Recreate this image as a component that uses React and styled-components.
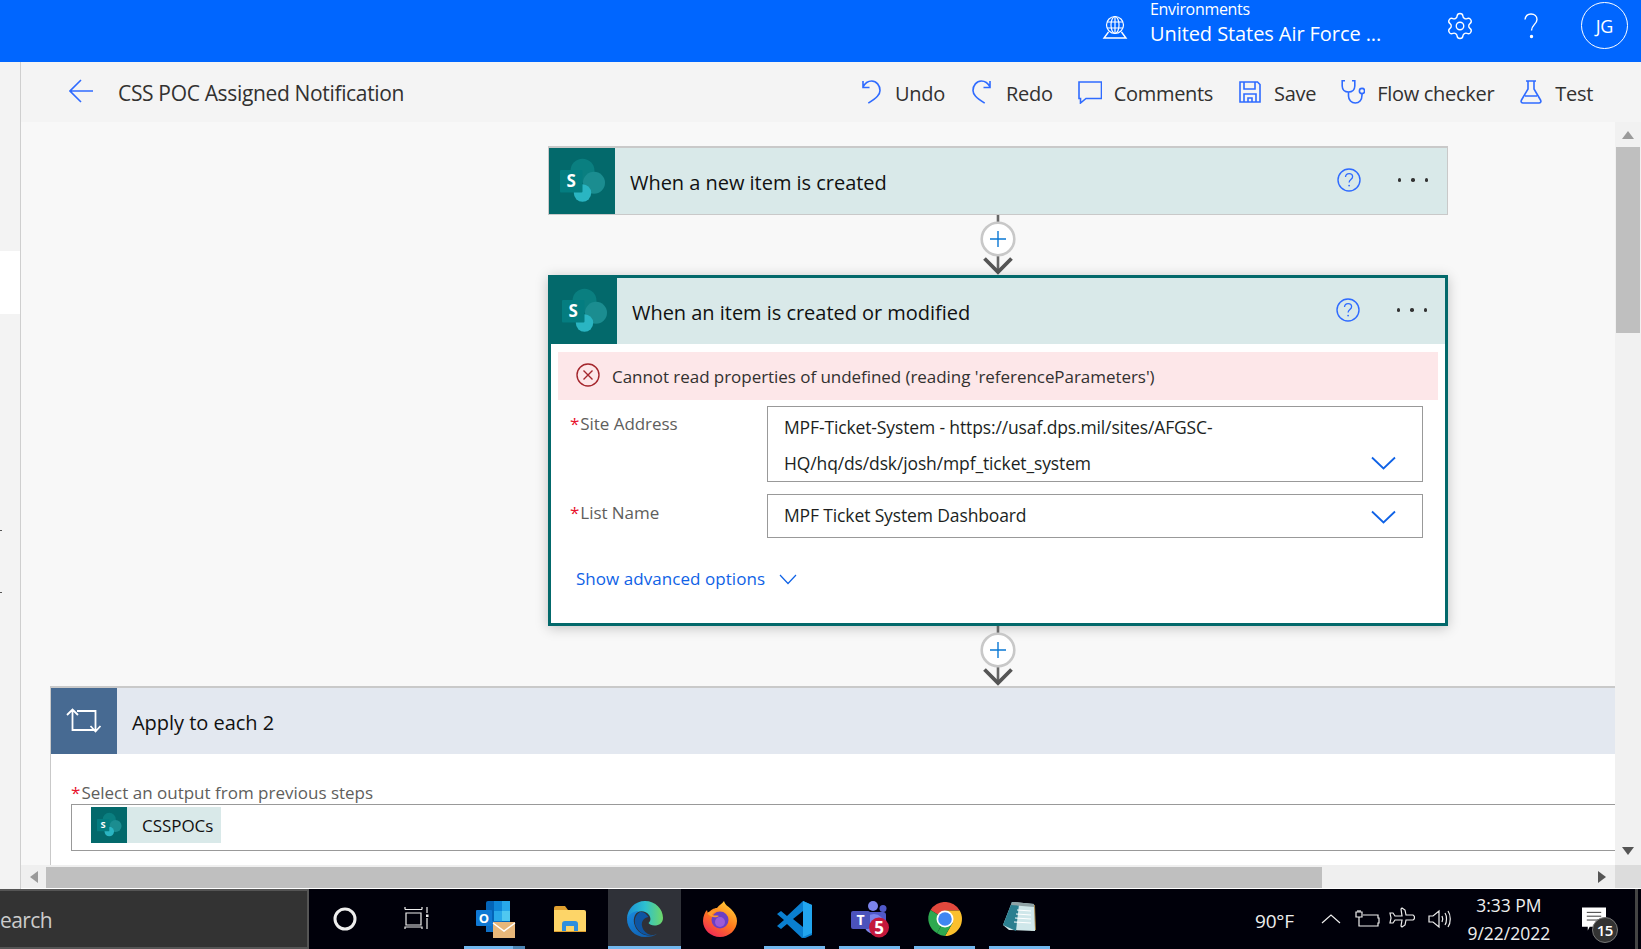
import React from 'react';
import styled, { createGlobalStyle } from 'styled-components';
import { Settings } from 'lucide-react';

const Global = createGlobalStyle`
  html, body { margin: 0; padding: 0; height: 100%; overflow: hidden; }
  body { font-family: "Open Sans", "Noto Sans", sans-serif; background: #000; }
  * { box-sizing: border-box; }
`;

const BLUE = '#2f6bff';
const TEAL = '#03696b';

const Page = styled.div`
  width: 1641px; height: 949px; display: flex; flex-direction: column; overflow: hidden;
`;

/* top bar */
const TopBar = styled.header`
  height: 62px; flex: none; background: #0066ff; color: #fff; display: flex; align-items: flex-start; justify-content: flex-end; padding-right: 13px;
`;
const GlobeSlot = styled.div`
  width: 26px; height: 26px; margin-top: 14px; margin-right: 22px; display: flex;
`;
const EnvBlock = styled.div`
  width: 297px; display: flex; flex-direction: column;
`;
const EnvLabel = styled.span`font-size: 16px; line-height: 18px; letter-spacing: -0.33px;`;
const EnvName = styled.span`font-size: 20px; line-height: 30px; margin-top: 1px; letter-spacing: -0.08px;`;
const TopIcon = styled.div`
  width: 26px; height: 28px; margin-top: 12px; margin-right: ${p => p.$mr}px; display: flex; align-items: center; justify-content: center;
  svg.gear { flex: none; }
`;
const QuestionGlyph = styled.svg`width: 16px; height: 26px;`;
const Avatar = styled.div`
  width: 47px; height: 47px; margin-top: 2px; border: 1px solid #fff; border-radius: 50%; display: flex; align-items: center; justify-content: center; font-size: 18px; letter-spacing: -0.3px;
`;

/* body */
const Body = styled.div`flex: 1; display: flex; min-height: 0;`;
const Rail = styled.nav`
  width: 21px; flex: none; background: #f3f3f3; border-right: 1px solid #cfcfcf; display: flex; flex-direction: column;
`;
const RailActive = styled.div`height: 63px; margin-top: 189px; background: #fff; margin-right: 0;`;
const RailPip = styled.div`width: 2px; height: 1px; background: #555; margin-top: ${p => p.$mt}px;`;
const Main = styled.main`flex: 1; min-width: 0; display: flex; flex-direction: column;`;

/* command bar */
const CommandBar = styled.div`
  height: 60px; flex: none; background: #f4f4f4; display: flex; align-items: center; padding: 2px 48px 0 48px; color: #323130; font-size: 20px;
`;
const BackIcon = styled.svg`width: 24px; height: 24px; margin-right: 25px; margin-top: -4px; flex: none;`;
const FlowTitle = styled.div`flex: 1; letter-spacing: -0.34px; font-size: 21px; margin-top: -1px;`;
const Commands = styled.div`display: flex; gap: 25px;`;
const Command = styled.button`
  display: flex; align-items: center; gap: 12px; border: 0; padding: 0; background: none; font: inherit; color: inherit; letter-spacing: -0.3px;
  svg { width: 24px; height: 24px; flex: none; margin-top: -3px; fill: none; stroke: ${BLUE}; stroke-width: 1.6; }
`;

/* canvas */
const Viewport = styled.div`flex: 1; min-height: 0; display: flex;`;
const Canvas = styled.div`
  flex: 1; min-width: 0; background: #f8f8f8; overflow: hidden; padding-top: 24px; display: flex; flex-direction: column;
`;
const StepColumn = styled.section`width: 900px; margin-left: 527px; display: flex; flex-direction: column;`;
const TriggerCard = styled.div`
  height: 69px; background: #d9e9e9; border: 1px solid #c9c9c9; border-top-width: 2px; display: flex; align-items: stretch;
`;
const ActiveCard = styled.div`
  height: 351px; border: 3px solid ${TEAL}; background: #fff; box-shadow: 0 2px 12px rgba(0,0,0,.22); display: flex; flex-direction: column;
`;
const CardHeader = styled.div`height: 66px; flex: none; background: #d9e9e9; display: flex; align-items: stretch;`;
const IconBlock = styled.div`
  width: ${p => p.$w || 66}px; flex: none; background: ${p => p.$bg || TEAL}; display: flex; align-items: center; justify-content: center;
`;
const CardTitle = styled.div`
  flex: 1; display: flex; align-items: center; padding: 2px 0 0 ${p => p.$pl}px; font-size: 20px; color: #111; letter-spacing: -0.03px;
`;
const HelpIcon = styled.svg`width: 26px; height: 26px; align-self: center; margin-top: -2px; margin-right: 36px;`;
const Dots = styled.div`
  display: flex; gap: 10px; align-self: center; margin-top: -2px; margin-right: ${p => p.$mr}px;
  i { width: 3.5px; height: 3.5px; border-radius: 50%; background: #333; display: block; }
`;
const ErrorBar = styled.div`
  height: 48px; flex: none; margin: 8px 7px 0; background: #fde7e9; display: flex; align-items: center; padding-left: 18px; gap: 12px; font-size: 17px; color: #323130; letter-spacing: -0.05px;
`;
const ErrorIcon = styled.svg`width: 24px; height: 24px; flex: none; margin-top: -2px;`;
const FieldRow = styled.div`
  display: grid; grid-template-columns: 197px 656px; padding-left: 19px; margin-top: ${p => p.$mt}px;
`;
const FieldLabel = styled.label`
  padding-top: ${p => p.$pt}px; line-height: 22px; font-size: 17px; color: #605e5c; letter-spacing: -0.05px;
`;
const Star = styled.span`color: #e8112d; margin-right: 1px;`;
const FieldBox = styled.div`
  height: ${p => p.$h}px; border: 1px solid #999; background: #fff; display: flex; padding-left: 16px; padding-right: 26px; font-size: 17.5px; color: #201f1e; letter-spacing: -0.13px;
`;
const FieldValue = styled.div`flex: 1; line-height: ${p => p.$lh}px; padding-top: ${p => p.$pt}px;`;
const FieldChevron = styled.svg`width: 25px; height: 14px; flex: none; align-self: ${p => p.$align}; margin-bottom: ${p => p.$mb}px;`;
const AdvancedLink = styled.a`
  display: flex; align-items: center; gap: 14px; margin: 29px 0 0 25px; font-size: 17px; line-height: 24px; color: #0f62e6; letter-spacing: 0.05px;
`;
const ConnectorWrap = styled.div`height: 60px; flex: none; display: flex; justify-content: center;`;
const LoopCard = styled.section`
  margin-left: 29px; width: 1700px; flex: 1; display: flex; flex-direction: column; border-top: 2px solid #c9c9c9; border-left: 1px solid #c9c9c9; background: #fff;
`;
const LoopHeader = styled.div`height: 66px; flex: none; background: #e3e8f0; display: flex; align-items: stretch;`;
const LoopBody = styled.div`padding: 28px 0 0 20px;`;
const LoopLabel = styled.div`line-height: 22px; font-size: 17px; color: #605e5c; letter-spacing: 0px;`;
const TokenField = styled.div`
  height: 47px; border: 1px solid #999; padding: 2px 0 0 19px; display: flex;
`;
const Token = styled.div`
  height: 36px; width: 130px; background: #d9e9e9; display: flex; align-items: center; font-size: 17px; color: #111; letter-spacing: -0.05px;
`;
const TokenText = styled.span`padding-left: 15px;`;

/* scrollbars */
const VScroll = styled.div`
  width: 26px; flex: none; background: #f1f1f1; display: flex; flex-direction: column; align-items: stretch;
`;
const ArrowSlot = styled.div`
  height: ${p => p.$h}px; flex: none; display: flex; align-items: center; justify-content: center;
`;
const VThumb = styled.div`height: 186px; flex: none; background: #bfbfbf; margin: 0 1px;`;
const VSpacer = styled.div`flex: 1;`;
const HScroll = styled.div`
  height: 24px; flex: none; display: flex; background: #efefef; border-bottom: 1px solid #fff;
`;
const HArrow = styled.div`width: 25px; flex: none; display: flex; align-items: center; justify-content: center;`;
const HThumb = styled.div`width: 1276px; height: 21px; margin-top: 2px; background: #bfbfbf; flex: none;`;
const HSpacer = styled.div`flex: 1;`;
const HArrowEnd = styled.div`width: 26px; flex: none; display: flex; align-items: center; justify-content: center;`;
const HCorner = styled.div`width: 26px; flex: none; background: #dcdcdc;`;

/* taskbar */
const Taskbar = styled.footer`
  height: 60px; flex: none; background: #00000a; display: flex; align-items: stretch; color: #eee;
`;
const SearchBox = styled.div`
  width: 309px; margin-right: -2px; padding-top: 2px; flex: none; background: #333; border: 2px solid #555; border-left: 0; display: flex; align-items: center; font-size: 21px; color: #ccc; letter-spacing: -0.6px;
`;
const TaskItem = styled.div`
  width: 75px; flex: none; position: relative; display: flex; align-items: center; justify-content: center; background: ${p => (p.$active ? 'linear-gradient(90deg,#00000a 1px,#2f3138 1px,#2f3138 74px,#00000a 74px)' : 'none')};
  ${p => p.$bar && `&::after { content: ''; position: absolute; bottom: 0; height: 3px; left: ${p.$active ? 1 : 7}px; right: ${p.$active ? 1 : 7}px; background: ${p.$split ? 'linear-gradient(90deg,#72b7ee 80%,#4c85b5 80%)' : '#72b7ee'}; }`}
`;
const TaskViewGlyph = styled.svg`width: 26px; height: 26px; margin-right: 6px; fill: none; stroke: #eee; stroke-width: 1.2;`;
const Tray = styled.div`flex: 1; display: flex; align-items: center;`;
const Temp = styled.span`font-size: 19px; margin-left: 198px; letter-spacing: -0.2px; margin-top: 3px;`;
const TrayIcon = styled.svg`
  width: ${p => p.$w}px; height: 24px; margin-left: ${p => p.$ml}px; flex: none; fill: none; stroke: #eee; stroke-width: 1.2;
`;
const Clock = styled.div`
  width: 100px; margin-left: 7px; display: flex; flex-direction: column; align-items: center; font-size: 17.5px; line-height: 28px; color: #eee; margin-top: -1px; letter-spacing: 0px;
`;
const Notice = styled.div`
  width: 36px; height: 40px; margin-left: 23px; position: relative; align-self: flex-start; margin-top: 18px;
`;
const NoticeBadge = styled.span`
  position: absolute; right: 0; bottom: 4px; width: 26px; height: 26px; border-radius: 50%; background: #333; border: 1px solid #777; color: #fff; font-size: 15px; font-weight: 600; display: flex; align-items: center; justify-content: center; letter-spacing: -0.5px;
`;
const EdgeLine = styled.div`width: 3px; align-self: stretch; background: #444; margin-left: 17px;`;

/* drawings */
function SpIcon({ size = 66 }) {
  return (
    <svg width={size} height={size} viewBox="0 0 66 66">
      <circle cx="33.5" cy="22.7" r="12" fill="#0a7f80" />
      <circle cx="45" cy="34.7" r="11" fill="#1b8d90" />
      <circle cx="33.5" cy="45" r="8.7" fill="#2ab5c2" />
      <rect x="11" y="22" width="22.5" height="22.5" rx="1" fill="#047d80" />
      <text x="22.3" y="39" textAnchor="middle" fontFamily="Open Sans" fontWeight="700" fontSize="17" fill="#fff">S</text>
    </svg>
  );
}
function Help() {
  return (
    <HelpIcon viewBox="0 0 26 26">
      <circle cx="13" cy="13" r="11" fill="none" stroke={BLUE} strokeWidth="1.4" />
      <path d="M9.5 10c.2-2.2 1.7-3.3 3.6-3.3 2 0 3.5 1.3 3.5 3.1 0 2.7-3.5 2.8-3.5 5.6" fill="none" stroke={BLUE} strokeWidth="1.3" />
      <circle cx="13.1" cy="18.6" r="0.9" fill={BLUE} />
    </HelpIcon>
  );
}
function Connector() {
  return (
    <ConnectorWrap>
      <svg width="36" height="60" viewBox="0 0 36 60">
        <path d="M18 0v7M18 40v18" stroke="#666" strokeWidth="2.6" />
        <circle cx="18" cy="24" r="16.3" fill="#fff" stroke="#c8c8c8" strokeWidth="2.6" />
        <path d="M18 16v16M10 24h16" stroke="#0a78d4" strokeWidth="1.4" />
        <path d="M4.5 43.5L18 57l13.5-13.5" fill="none" stroke="#555" strokeWidth="3.8" />
      </svg>
    </ConnectorWrap>
  );
}
function Chevron({ $align, $mb }) {
  return (
    <FieldChevron $align={$align} $mb={$mb} viewBox="0 0 25 14">
      <path d="M1 1.5l11.5 11L24 1.5" fill="none" stroke="#0f62e6" strokeWidth="1.8" />
    </FieldChevron>
  );
}
const SmallChev = styled.svg`width: 18px; height: 11px;`;

export default function App() {
  return (
    <Page>
      <Global />
      <TopBar>
        <GlobeSlot>
          <svg width="26" height="26" viewBox="0 0 26 26" fill="none" stroke="#fff" strokeWidth="1.2">
            <circle cx="13" cy="11" r="8.5" />
            <ellipse cx="13" cy="11" rx="4" ry="8.5" />
            <path d="M13 2.5v17M5 8h16M5 14h16" />
            <path d="M6.5 18L2 24h22l-4.5-6" strokeWidth="1.4" />
          </svg>
        </GlobeSlot>
        <EnvBlock>
          <EnvLabel>Environments</EnvLabel>
          <EnvName>United States Air Force ...</EnvName>
        </EnvBlock>
        <TopIcon $mr={45}><Settings className="gear" size={30} strokeWidth={1.1} color="#fff" /></TopIcon>
        <TopIcon $mr={37}>
          <QuestionGlyph viewBox="0 0 16 26" fill="none" stroke="#fff" strokeWidth="1.4">
            <path d="M2 6.5C2.5 3 5 1 8 1c3.5 0 6 2.3 6 5.5 0 4.5-5.5 5.5-5.5 11" />
            <circle cx="8.5" cy="23.5" r="1" fill="#fff" />
          </QuestionGlyph>
        </TopIcon>
        <Avatar>JG</Avatar>
      </TopBar>
      <Body>
        <Rail>
          <RailActive />
          <RailPip $mt={216} />
          <RailPip $mt={61} />
        </Rail>
        <Main>
          <CommandBar>
            <BackIcon viewBox="0 0 24 24" fill="none" stroke={BLUE} strokeWidth="1.6">
              <path d="M1 12h23M12 1L1 12l11 11" />
            </BackIcon>
            <FlowTitle>CSS POC Assigned Notification</FlowTitle>
            <Commands>
              <Command>
                <svg viewBox="0 0 24 24"><path d="M4 1v6.500h6.500M4 7C6 3 9 1 12.700 1 17.500 1 21 5.500 21 10.500c0 4-3 7-11.700 12.700" /></svg>
                Undo
              </Command>
              <Command>
                <svg viewBox="0 0 24 24"><path d="M20 1v6.500h-6.500M20 7C18 3 15 1 11.300 1 6.500 1 3 5.500 3 10.500c0 4 3 7 11.700 12.700" /></svg>
                Redo
              </Command>
              <Command>
                <svg viewBox="0 0 24 24"><path d="M1 2h22.500v16.500H8L2.500 23v-4.500H1z" /></svg>
                Comments
              </Command>
              <Command>
                <svg viewBox="0 0 24 24"><path d="M2 2h17.500L22 4.500V22H2zM6 2v7h11V2M6 22v-8h12v8M10 22v-4h4v4" /></svg>
                Save
              </Command>
              <Command>
                <svg viewBox="0 0 24 24"><path d="M4 .8H1.200V6c0 3.500 2.600 6 6.300 6s6.300-2.500 6.300-6V.8H11M7.500 12v4c0 4 3 7 6.800 7s6.700-3 6.700-8v-1" /><circle cx="21" cy="11" r="2.600" /></svg>
                Flow checker
              </Command>
              <Command>
                <svg viewBox="0 0 24 24"><path d="M7 1h10M9 1v8L2.500 20c-1 1.800 0 3 1.500 3h16c1.500 0 2.500-1.200 1.500-3L15 9V1M6 16h12" /></svg>
                Test
              </Command>
            </Commands>
          </CommandBar>
          <Viewport>
            <Canvas>
              <StepColumn>
                <TriggerCard>
                  <IconBlock><SpIcon /></IconBlock>
                  <CardTitle $pl={15}>When a new item is created</CardTitle>
                  <Help />
                  <Dots $mr={19}><i /><i /><i /></Dots>
                </TriggerCard>
                <Connector />
                <ActiveCard>
                  <CardHeader>
                    <IconBlock><SpIcon /></IconBlock>
                    <CardTitle $pl={15}>When an item is created or modified</CardTitle>
                    <Help />
                    <Dots $mr={18}><i /><i /><i /></Dots>
                  </CardHeader>
                  <ErrorBar>
                    <ErrorIcon viewBox="0 0 24 24" fill="none" stroke="#a4262c" strokeWidth="1.4">
                      <circle cx="12" cy="12" r="11" />
                      <path d="M7.500 7.500l9 9M16.500 7.500l-9 9" />
                    </ErrorIcon>
                    Cannot read properties of undefined (reading 'referenceParameters')
                  </ErrorBar>
                  <FieldRow $mt={6}>
                    <FieldLabel $pt={7}><Star>*</Star>Site Address</FieldLabel>
                    <FieldBox $h={76}>
                      <FieldValue $lh={36} $pt={2}>
                        MPF-Ticket-System - https://usaf.dps.mil/sites/AFGSC-<br />HQ/hq/ds/dsk/josh/mpf_ticket_system
                      </FieldValue>
                      <Chevron $align="flex-end" $mb={11} />
                    </FieldBox>
                  </FieldRow>
                  <FieldRow $mt={12}>
                    <FieldLabel $pt={8}><Star>*</Star>List Name</FieldLabel>
                    <FieldBox $h={44}>
                      <FieldValue $lh={41} $pt={0}>MPF Ticket System Dashboard</FieldValue>
                      <Chevron $align="center" $mb={-2} />
                    </FieldBox>
                  </FieldRow>
                  <AdvancedLink>
                    Show advanced options
                    <SmallChev viewBox="0 0 18 11"><path d="M1 1l8 8.500L17 1" fill="none" stroke="#0f62e6" strokeWidth="1.2" /></SmallChev>
                  </AdvancedLink>
                </ActiveCard>
                <Connector />
              </StepColumn>
              <LoopCard>
                <LoopHeader>
                  <IconBlock $bg="#476a92">
                    <svg width="36" height="26" viewBox="0 0 36 26" fill="none" stroke="#fff" strokeWidth="1.8">
                      <path d="M1 7l5.500-5.500L12 7M6.500 2v20H30M34.500 18l-5 5.500-5-5.500M29.500 23V3H11" />
                    </svg>
                  </IconBlock>
                  <CardTitle $pl={15}>Apply to each 2</CardTitle>
                </LoopHeader>
                <LoopBody>
                  <LoopLabel><Star>*</Star>Select an output from previous steps</LoopLabel>
                  <TokenField>
                    <Token>
                      <IconBlock $w={36}><SpIcon size={36} /></IconBlock>
                      <TokenText>CSSPOCs</TokenText>
                    </Token>
                  </TokenField>
                </LoopBody>
              </LoopCard>
            </Canvas>
            <VScroll>
              <ArrowSlot $h={25}>
                <svg width="12" height="8" viewBox="0 0 12 8"><path d="M6 0l6 8H0z" fill="#9a9a9a" /></svg>
              </ArrowSlot>
              <VThumb />
              <VSpacer />
              <ArrowSlot $h={28}>
                <svg width="12" height="8" viewBox="0 0 12 8"><path d="M0 0h12L6 8z" fill="#555" /></svg>
              </ArrowSlot>
            </VScroll>
          </Viewport>
          <HScroll>
            <HArrow><svg width="8" height="12" viewBox="0 0 8 12"><path d="M8 0v12L0 6z" fill="#9a9a9a" /></svg></HArrow>
            <HThumb />
            <HSpacer />
            <HArrowEnd><svg width="8" height="12" viewBox="0 0 8 12"><path d="M0 0l8 6-8 6z" fill="#555" /></svg></HArrowEnd>
            <HCorner />
          </HScroll>
        </Main>
      </Body>
      <Taskbar>
        <SearchBox>earch</SearchBox>
        <TaskItem>
          <svg width="26" height="26" viewBox="0 0 26 26"><circle cx="13" cy="13" r="10" fill="none" stroke="#eee" strokeWidth="3" /></svg>
        </TaskItem>
        <TaskItem>
          <TaskViewGlyph viewBox="0 0 26 26">
            <path d="M1 3.500h17M1 3.500V1M18 3.500V1M2 7h15v12H2zM1 23v-2h17v2M23 1v6M23 12v11" />
            <rect x="22" y="8.500" width="2.500" height="2.500" fill="#eee" stroke="none" />
          </TaskViewGlyph>
        </TaskItem>
        <TaskItem $bar $split>
          <svg width="44" height="44" viewBox="0 0 44 44">
            <rect x="13" y="4" width="24" height="31" rx="2" fill="#0364b8" />
            <rect x="21" y="4" width="8" height="10" fill="#0f86d8" />
            <rect x="29" y="4" width="8" height="10" fill="#28a8ea" />
            <rect x="21" y="14" width="8" height="10" fill="#28a8ea" />
            <rect x="29" y="14" width="8" height="10" fill="#50c8f0" />
            <rect x="13" y="24" width="16" height="11" fill="#0f6fc6" />
            <rect x="3" y="13" width="16" height="16" rx="1" fill="#0f78d4" />
            <text x="11" y="26" textAnchor="middle" fontFamily="Open Sans" fontWeight="700" fontSize="13" fill="#fff">O</text>
            <rect x="20" y="25" width="22" height="16" fill="#e8b77a" />
            <path d="M20 26l11 8 11-8" fill="none" stroke="#fff" strokeWidth="1.500" />
          </svg>
        </TaskItem>
        <TaskItem>
          <svg width="34" height="28" viewBox="0 0 34 28">
            <path d="M1 3a2 2 0 012-2h9l3 4H1z" fill="#e0a030" />
            <path d="M1 5h30a2 2 0 012 2v19a1 1 0 01-1 1H2a1 1 0 01-1-1z" fill="#fdd568" />
            <path d="M9 27v-8a3 3 0 013-3h10a3 3 0 013 3v8h-4v-6h-8v6z" fill="#2e8fdc" />
            <path d="M1 26h32v1H1z" fill="#e0a030" />
          </svg>
        </TaskItem>
        <TaskItem $bar $active>
          <svg width="36" height="36" viewBox="0 0 36 36">
            <defs>
              <linearGradient id="edgeTop" x1="0" y1="0.500" x2="1" y2="0.500"><stop offset="0" stopColor="#1a8fd6" /><stop offset="0.500" stopColor="#2dc0d0" /><stop offset="1" stopColor="#6fd868" /></linearGradient>
              <linearGradient id="edgeLow" x1="0" y1="0" x2="0.600" y2="1"><stop offset="0" stopColor="#1a8ade" /><stop offset="1" stopColor="#0f62b4" /></linearGradient>
            </defs>
            <path d="M0 18C0 8 8 0 18 0c10.500 0 18 8 18 17 0 5-4 7.500-8.500 7.500-3 0-5-1-6-2.500 2.500-2 2.500-5 .500-8C19 10 14 9.500 10 11.500 5 14 1.500 16 0 18z" fill="url(#edgeTop)" />
            <path d="M0 18c1-4 7-8.500 12-8 -5 3-6.500 9-4 15 2.500 6.500 9 10 16 9.500 3-.2 5-1 7-2.500-3.500 3-8 4-13 4C8 36 0 28 0 18z" fill="url(#edgeLow)" />
            <path d="M13 11c-5 3-6.500 9-4 14.500C11.500 31 17 34.500 24 34c-4-1-8-4-9-9-.7-4 1-8 6.500-9-2.500-3.500-5-5.500-8.500-5z" fill="#0e55a2" />
          </svg>
        </TaskItem>
        <TaskItem>
          <svg width="36" height="38" viewBox="0 0 36 38">
            <defs>
              <linearGradient id="fox" x1="0.800" y1="0" x2="0.200" y2="1"><stop offset="0" stopColor="#ffd43a" /><stop offset="0.500" stopColor="#ff7a1c" /><stop offset="1" stopColor="#f0235a" /></linearGradient>
            </defs>
            <path d="M22 1c1 4 4 5 7 8 4 4 6 8 6 12 0 9-8 16-17 16S1 30 1 21c0-5 2-9 4-11l1 4c2-4 6-6 9-6 2-3 5-4 7-7z" fill="url(#fox)" />
            <circle cx="18" cy="20" r="8.500" fill="#6a3fc4" />
            <circle cx="18" cy="22" r="5" fill="#9b5bd6" />
            <path d="M5 13c3-2 7-4 11-2-3 0-5 2-6 4 3 1 5 0 7 1-3 2-8 2-12-3z" fill="#ff9a2e" />
          </svg>
        </TaskItem>
        <TaskItem $bar>
          <svg width="36" height="38" viewBox="0 0 36 38">
            <path d="M26 1L10 16l-6-5-4 3 7 6-7 6 4 3 6-5 16 15 9-4V5z" fill="#0a7fd0" />
            <path d="M26 1v36l9-4V5z" fill="#22a5ee" />
            <path d="M26 11v16l-10-8z" fill="#00000a" />
          </svg>
        </TaskItem>
        <TaskItem $bar>
          <svg width="40" height="38" viewBox="0 0 40 38">
            <circle cx="23" cy="6" r="5" fill="#7b83eb" />
            <circle cx="33" cy="8.500" r="3.500" fill="#5059c9" />
            <rect x="16" y="12" width="20" height="16" rx="3" fill="#5059c9" />
            <circle cx="24" cy="24" r="10" fill="#7b83eb" />
            <rect x="1" y="11" width="19" height="18" rx="2" fill="#4b53bc" />
            <text x="10.500" y="25" textAnchor="middle" fontFamily="Open Sans" fontWeight="700" fontSize="14" fill="#fff">T</text>
            <circle cx="29" cy="27.500" r="10" fill="#c4183c" />
            <text x="29" y="34" textAnchor="middle" fontFamily="Open Sans" fontWeight="700" fontSize="17" fill="#fff">5</text>
          </svg>
        </TaskItem>
        <TaskItem $bar>
          <svg width="34" height="34" viewBox="0 0 34 34">
            <path d="M17 17L2.500 8A17 17 0 0131.700 8.500H17z" fill="#e2483d" />
            <path d="M17 17l-8 14.200A17 17 0 012.500 8z" fill="#2da94f" />
            <path d="M17 8.500h14.700A17 17 0 0117 34l7.500-13z" fill="#fbc02d" />
            <path d="M17 34a17 17 0 01-8-2.800L17 17l7.500 4z" fill="#2da94f" />
            <circle cx="17" cy="17" r="8.500" fill="#fff" />
            <circle cx="17" cy="17" r="6.800" fill="#3f86f2" />
          </svg>
        </TaskItem>
        <TaskItem $bar>
          <svg width="34" height="36" viewBox="0 0 34 36">
            <path d="M9 2l23 2 1 25-5 1z" fill="#a07c3c" />
            <path d="M9 1l22 2 1 27-26-1L0 24z" fill="#cfe7ea" />
            <path d="M9 1l-9 23 13 6L16 3z" fill="#2a7f90" />
            <path d="M9 1l22 2v3L8 4z" fill="#8fa3a6" />
            <path d="M14 9l14 1M13 13l15 1M12 17l16 1M11 21l17 1" stroke="#fff" strokeWidth="1" />
          </svg>
        </TaskItem>
        <Tray>
          <Temp>90°F</Temp>
          <TrayIcon $w={20} $ml={27} viewBox="0 0 20 24"><path d="M1 16l9-8 9 8" /></TrayIcon>
          <TrayIcon $w={26} $ml={13} viewBox="0 0 26 24">
            <path d="M2 5v5h6V5zM4 3v2M6 3v2M5 10v9h19v-3h1v-5h-1V8H9" />
          </TrayIcon>
          <TrayIcon $w={26} $ml={9} viewBox="0 0 26 24"><path d="M13 1l3 2 1 5h7c2 1 2 4 0 5h-7l-1 5-3 2 -1-1 1-6H6l-2 3H1l1-5-1-5h3l2 3h7L12 2z" /></TrayIcon>
          <TrayIcon $w={24} $ml={13} viewBox="0 0 24 24"><path d="M1 9v6h4l6 5V4L5 9zM14 9c1 2 1 4 0 6M17 6c2 3 2 9 0 12M20 4c3 4 3 12 0 16" /></TrayIcon>
          <Clock><span>3:33 PM</span><span>9/22/2022</span></Clock>
          <Notice>
            <svg width="24" height="28" viewBox="0 0 25 28">
              <path d="M0 0h25v20H8l-2 4v-4H0z" fill="#fff" />
              <path d="M5 5h15M5 9h15M5 13h15" stroke="#333" strokeWidth="1" />
            </svg>
            <NoticeBadge>15</NoticeBadge>
          </Notice>
          <EdgeLine />
        </Tray>
      </Taskbar>
    </Page>
  );
}
